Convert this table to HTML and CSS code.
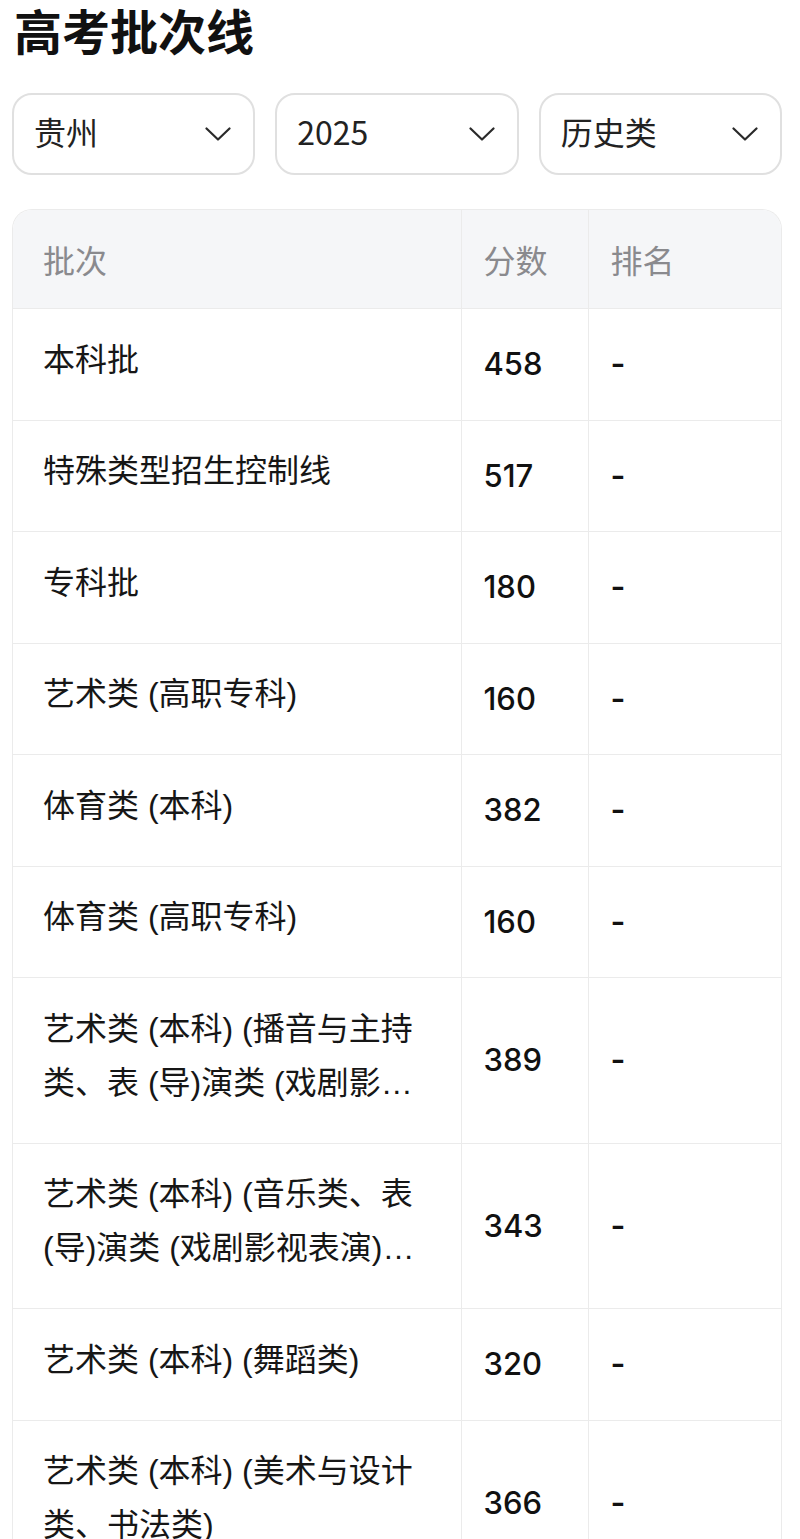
FILE: index.html
```html
<!DOCTYPE html>
<html lang="zh-CN">
<head>
<meta charset="utf-8">
<title>高考批次线</title>
<link rel="stylesheet" href="styles.css">
</head>
<body>
<div class="page">
  <h1 class="title">高考批次线</h1>
  <div class="filters">
    <div class="select"><span>贵州</span><svg class="chev" viewBox="0 0 26 14"><polyline points="1.5,1.5 13,12.5 24.5,1.5"/></svg></div>
    <div class="select"><span>2025</span><svg class="chev" viewBox="0 0 26 14"><polyline points="1.5,1.5 13,12.5 24.5,1.5"/></svg></div>
    <div class="select"><span>历史类</span><svg class="chev" viewBox="0 0 26 14"><polyline points="1.5,1.5 13,12.5 24.5,1.5"/></svg></div>
  </div>
  <div class="table-wrap">
    <table class="tbl">
      <colgroup><col class="c1"><col class="c2"><col class="c3"></colgroup>
      <thead>
        <tr><th class="first">批次</th><th>分数</th><th>排名</th></tr>
      </thead>
      <tbody>
        <tr><td class="first"><div class="clamp">本科批</div></td><td class="num">458</td><td class="rank">-</td></tr>
        <tr><td class="first"><div class="clamp">特殊类型招生控制线</div></td><td class="num">517</td><td class="rank">-</td></tr>
        <tr><td class="first"><div class="clamp">专科批</div></td><td class="num">180</td><td class="rank">-</td></tr>
        <tr><td class="first"><div class="clamp">艺术类 (高职专科)</div></td><td class="num">160</td><td class="rank">-</td></tr>
        <tr><td class="first"><div class="clamp">体育类 (本科)</div></td><td class="num">382</td><td class="rank">-</td></tr>
        <tr><td class="first"><div class="clamp">体育类 (高职专科)</div></td><td class="num">160</td><td class="rank">-</td></tr>
        <tr><td class="first"><div class="clamp">艺术类 (本科) (播音与主持类、表 (导)演类 (戏剧影视导演)、表 (导)演类 (服装表演))</div></td><td class="num">389</td><td class="rank">-</td></tr>
        <tr><td class="first"><div class="clamp">艺术类 (本科) (音乐类、表 (导)演类 (戏剧影视表演)、表 (导)演类 (航空服务艺术与管理))</div></td><td class="num">343</td><td class="rank">-</td></tr>
        <tr><td class="first"><div class="clamp">艺术类 (本科) (舞蹈类)</div></td><td class="num">320</td><td class="rank">-</td></tr>
        <tr><td class="first"><div class="clamp">艺术类 (本科) (美术与设计类、书法类)</div></td><td class="num">366</td><td class="rank">-</td></tr>
      </tbody>
    </table>
  </div>
</div>
</body>
</html>
```
FILE: styles.css
```css
html, body {
  margin: 0;
  padding: 0;
  background: #ffffff;
}
body {
  font-family: "Noto Sans CJK SC", "Noto Sans", sans-serif;
  color: #161616;
}
.page {
  padding: 0 18px 0 12px;
}
.title {
  margin: 0;
  padding: 0 0 4px 2px;
  font-size: 48px;
  line-height: 58px;
  font-weight: 700;
  color: #111;
}
.filters {
  margin-top: 31px;
  display: grid;
  grid-template-columns: 1fr 1fr 1fr;
  gap: 20px;
}
.select {
  height: 78px;
  box-sizing: content-box;
  border: 2px solid #e0e0e0;
  border-radius: 20px;
  display: flex;
  align-items: center;
  justify-content: space-between;
  padding: 0 22px 0 20px;
  font-size: 32px;
  color: #222;
}
.select span {
  line-height: 1;
  margin-bottom: 7px;
}
.chev {
  width: 26px;
  height: 14px;
  fill: none;
  stroke: #2a2a2a;
  stroke-width: 2.2;
  stroke-linecap: round;
  stroke-linejoin: round;
}
.table-wrap {
  margin-top: 34px;
  border: 1.5px solid #ebebeb;
  border-bottom: none;
  border-radius: 20px 20px 0 0;
  overflow: hidden;
}
.tbl {
  width: 100%;
  border-collapse: collapse;
  table-layout: fixed;
}
.c1 { width: 448px; }
.c2 { width: 127px; }
.tbl th {
  background: #f5f6f8;
  color: #8a8a8e;
  font-weight: 400;
  font-size: 32px;
  line-height: 54px;
  text-align: left;
  padding: 22px 22px 22px 22px;
  border-bottom: 1px solid #ebebeb;
}
.tbl th.first {
  padding-left: 30px;
}
.tbl th + th, .tbl td + td {
  border-left: 1.5px solid #ebebeb;
}
.tbl td {
  font-size: 32px;
  line-height: 54px;
  padding: 28.25px 22px;
  border-bottom: 1px solid #ebebeb;
  vertical-align: middle;
}
.tbl td.first {
  padding: 23.5px 24px 33px 30px;
}
.clamp {
  font-family: "Liberation Sans", "Noto Sans CJK SC", sans-serif;
  display: -webkit-box;
  -webkit-box-orient: vertical;
  -webkit-line-clamp: 2;
  overflow: hidden;
  color: #161616;
}
.tbl td.num {
  font-family: Inter, "Noto Sans", sans-serif;
  font-size: 31px;
  font-weight: 500;
  color: #111;
}
.rank {
  font-family: Inter, "Noto Sans", sans-serif;
  font-weight: 600;
  color: #111;
}
```
